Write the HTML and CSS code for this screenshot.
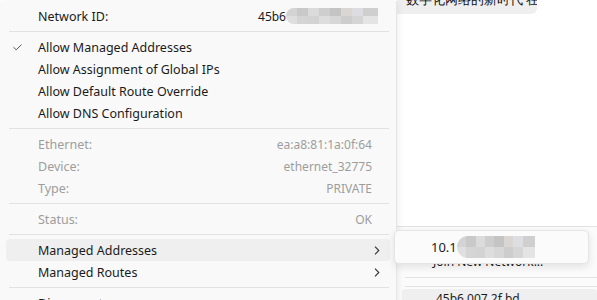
FILE: index.html
```html
<!DOCTYPE html>
<html lang="en">
<head>
    <meta charset="UTF-8">
    <title>Network Menu</title>
    <link rel="stylesheet" href="styles.css">
</head>
<body>

    <!-- Window behind the popup -->
    <div class="backdrop">
        <div class="bubble"><div class="bubble-text">数字化网络的新时代 在这里</div></div>
        <div class="tray-menu">
            <div class="tray-sep"></div>
            <div class="tray-item">Network 45b6 Managed</div>
            <div class="tray-item">Join New Network...</div>
            <div class="tray-sep first"></div>
            <div class="tray-sep second"></div>
            <div class="tray-item active">45b6 007 2f bd ...</div>
        </div>
    </div>

    <!-- Main context menu -->
    <div class="menu">
        <div class="item">
            <span class="check"></span>
            <span class="label">Network ID:</span>
            <span class="value"><span>45b6</span><span class="mosaic wide"></span></span>
        </div>
        <div class="sep"></div>
        <div class="item">
            <span class="check">
                <svg width="9" height="7" viewBox="0 0 9 7"><path d="M0.5 3.2 L3.2 5.8 L8.5 0.6" fill="none" stroke="#555" stroke-width="1"/></svg>
            </span>
            <span class="label">Allow Managed Addresses</span>
        </div>
        <div class="item"><span class="check"></span><span class="label">Allow Assignment of Global IPs</span></div>
        <div class="item"><span class="check"></span><span class="label">Allow Default Route Override</span></div>
        <div class="item"><span class="check"></span><span class="label">Allow DNS Configuration</span></div>
        <div class="sep"></div>
        <div class="item disabled"><span class="check"></span><span class="label">Ethernet:</span><span class="value">ea:a8:81:1a:0f:64</span></div>
        <div class="item disabled"><span class="check"></span><span class="label">Device:</span><span class="value">ethernet_32775</span></div>
        <div class="item disabled"><span class="check"></span><span class="label">Type:</span><span class="value">PRIVATE</span></div>
        <div class="sep"></div>
        <div class="item disabled"><span class="check"></span><span class="label">Status:</span><span class="value">OK</span></div>
        <div class="sep"></div>
        <div class="item hover">
            <span class="check"></span><span class="label">Managed Addresses</span>
            <span class="arrow"><svg width="6" height="9" viewBox="0 0 6 9"><path d="M1 0.7 L4.8 4.5 L1 8.3" fill="none" stroke="#333" stroke-width="1.1"/></svg></span>
        </div>
        <div class="item">
            <span class="check"></span><span class="label">Managed Routes</span>
            <span class="arrow"><svg width="6" height="9" viewBox="0 0 6 9"><path d="M1 0.7 L4.8 4.5 L1 8.3" fill="none" stroke="#333" stroke-width="1.1"/></svg></span>
        </div>
        <div class="sep"></div>
        <div class="item"><span class="check"></span><span class="label">Disconnect</span></div>
    </div>

    <!-- Submenu for Managed Addresses -->
    <div class="submenu">
        <span>10.1</span><span class="mosaic"></span>
    </div>

</body>
</html>
```

FILE: styles.css
```css
/* General reset */
* {
    margin: 0;
    padding: 0;
    box-sizing: border-box;
}

:root {
    --menu-bg: #f9f9f9;
    --text: #1b1b1b;
    --muted: #9d9d9d;
    --line: #e1e1e1;
    --hover: #efefef;
}

body {
    width: 597px;
    height: 300px;
    overflow: hidden;
    position: relative;
    background: #ffffff;
    font-family: "Noto Sans", "Open Sans", sans-serif;
    font-size: 12px;
    color: var(--text);
}

/* Window behind the popup */
.backdrop {
    position: absolute;
    inset: 0;
    padding-left: 397px;
}

.bubble {
    width: 140px;
    height: 14px;
    background: #efefef;
    border-radius: 0 0 6px 0;
    overflow: hidden;
    padding-left: 9px;
}

.bubble-text {
    margin-top: -11px;
    font-size: 13px;
    line-height: 20px;
    white-space: nowrap;
    color: #111;
}

.tray-menu {
    margin-top: 212px;
    background: #fbfbfb;
    height: 80px;
}

.tray-sep {
    height: 1px;
    background: #e3e3e3;
}

.tray-sep.first {
    margin: 4px 0 0 8px;
}

.tray-sep.second {
    margin: 8px 0 0 8px;
}

.tray-item {
    height: 23px;
    line-height: 23px;
    padding-left: 36px;
    font-size: 12px;
    white-space: nowrap;
}

.tray-item.active {
    background: #efefef;
    border-radius: 4px;
    margin: 2px 0 0 5px;
    line-height: 16px;
    padding-top: 2px;
    padding-left: 34px;
}

/* Main context menu */
.menu {
    position: absolute;
    left: 0;
    top: 1px;
    width: 397px;
    height: 320px;
    background: var(--menu-bg);
    border-right: 1px solid #e6e6e6;
    box-shadow: 2px 0 6px rgba(0, 0, 0, 0.06);
    padding: 4px 6px 0 6px;
}

.item {
    display: flex;
    align-items: center;
    height: 22px;
    border-radius: 4px;
    padding-right: 18px;
    white-space: nowrap;
}

.item.hover {
    background: var(--hover);
}

.item.disabled {
    color: var(--muted);
}

.check {
    width: 32px;
    display: flex;
    align-items: center;
    padding-left: 7px;
}

.label {
    flex: 1;
    font-size: 12.5px;
}

.value {
    display: flex;
    align-items: center;
}

.arrow {
    display: flex;
    margin-right: -8px;
}

.sep {
    height: 1px;
    background: var(--line);
    margin: 4px 1px 4px 3px;
}

/* Pixelated blur placeholder */
.mosaic {
    display: inline-block;
    width: 92px;
    height: 16px;
    border-radius: 8px 0 0 8px;
    background:
        linear-gradient(90deg, #cfcfcf 0 12%, #c4c4c4 12% 24%, #d8d8d8 24% 36%, #cacaca 36% 48%, #bfbfbf 48% 60%, #d6d3d0 60% 72%, #dadbdf 72% 84%, #cbcbcb 84% 100%) top / 100% 50% no-repeat,
        linear-gradient(90deg, #dcdcdc 0 12%, #d1d1d1 12% 24%, #cfcfcf 24% 36%, #dadada 36% 48%, #d4d4d4 48% 60%, #c9c9c9 60% 72%, #d2d2d2 72% 84%, #e2e2e2 84% 100%) bottom / 100% 50% no-repeat;
    opacity: 0.9;
}

.mosaic.wide {
    width: 92px;
    margin-right: -6px;
}

/* Submenu */
.submenu {
    position: absolute;
    left: 394px;
    top: 230px;
    width: 195px;
    height: 34px;
    background: #fbfbfb;
    border: 1px solid #e5e5e5;
    border-radius: 5px;
    box-shadow: 0 3px 8px rgba(0, 0, 0, 0.1);
    display: flex;
    align-items: center;
    padding-left: 36px;
    font-size: 13px;
}

.submenu .mosaic {
    width: 78px;
    height: 22px;
    border-radius: 11px 0 0 11px;
}
```
